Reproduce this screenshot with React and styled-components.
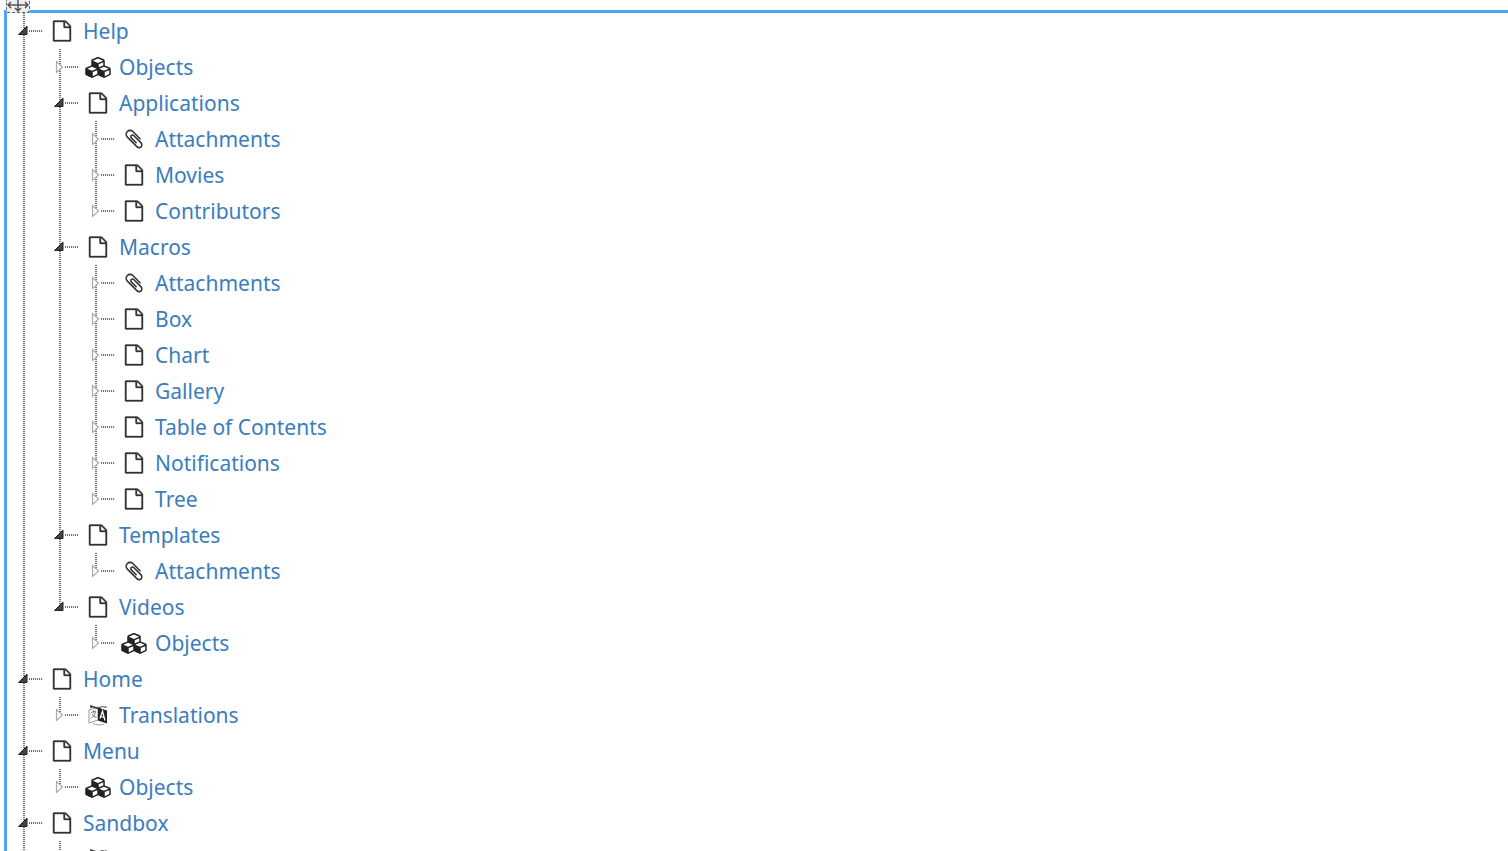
import React from "react";
import styled, { createGlobalStyle } from "styled-components";

const tree = [
  {
    label: "Help",
    icon: "page",
    children: [
      { label: "Objects", icon: "cubes" },
      {
        label: "Applications",
        icon: "page",
        children: [
          { label: "Attachments", icon: "clip" },
          { label: "Movies", icon: "page" },
          { label: "Contributors", icon: "page" },
        ],
      },
      {
        label: "Macros",
        icon: "page",
        children: [
          { label: "Attachments", icon: "clip" },
          { label: "Box", icon: "page" },
          { label: "Chart", icon: "page" },
          { label: "Gallery", icon: "page" },
          { label: "Table of Contents", icon: "page" },
          { label: "Notifications", icon: "page" },
          { label: "Tree", icon: "page" },
        ],
      },
      {
        label: "Templates",
        icon: "page",
        children: [{ label: "Attachments", icon: "clip" }],
      },
      {
        label: "Videos",
        icon: "page",
        children: [{ label: "Objects", icon: "cubes" }],
      },
    ],
  },
  {
    label: "Home",
    icon: "page",
    children: [{ label: "Translations", icon: "language" }],
  },
  {
    label: "Menu",
    icon: "page",
    children: [{ label: "Objects", icon: "cubes" }],
  },
  {
    label: "Sandbox",
    icon: "page",
    children: [{ label: "Translations", icon: "language" }],
  },
  { label: "XWiki", icon: "page" },
];

const PageIcon = () => (
  <svg width="20" height="22" viewBox="-60 -40 1656 1872" fill="#333" stroke="#333" strokeWidth="30">
    <path d="M1468 380q28 28 48 76t20 88v1152q0 40-28 68t-68 28H96q-40 0-68-28t-28-68V96q0-40 28-68T96 0h896q40 0 88 20t76 48zm-444-244v376h376q-10-29-22-41l-313-313q-12-12-41-22zm384 1528V640H992q-40 0-68-28t-28-68V128H128v1536h1280z" />
  </svg>
);

const CubesIcon = () => (
  <svg width="26" height="21" viewBox="0 0 2176 1792" fill="#222">
    <path d="M640 1632l384-192v-314l-384 164v342zm-64-454l404-173-404-173-404 173zm1088 454l384-192v-314l-384 164v342zm-64-454l404-173-404-173-404 173zm-448-293l384-165V454l-384 164v267zm-64-379l441-189-441-189-441 189zm1088 518v416q0 36-19 67t-52 47l-448 224q-25 14-57 14t-57-14l-448-224q-5-2-7-4-2 2-7 4l-448 224q-25 14-57 14t-57-14L71 1554q-33-16-52-47t-19-67v-416q0-38 21.500-70T78 906l434-186V320q0-38 21.500-70t56.500-48l448-192q23-10 50-10t50 10l448 192q35 16 56.500 48t21.500 70v400l434 186q36 16 57 48t21 70z" />
  </svg>
);

const ClipIcon = () => (
  <svg width="18" height="22" viewBox="0 0 1408 1792" fill="#333">
    <path d="M1404 1385q0 117-79 196t-196 79q-135 0-235-100L117 784Q4 669 4 513q0-159 110-270t269-111q158 0 273 113l605 606q10 10 10 22 0 16-30.500 46.500T1194 950q-13 0-23-10L565 333q-79-77-181-77-106 0-179 75t-73 181q0 105 76 181l776 777q63 63 145 63 64 0 106-42t42-106q0-82-63-145L633 659q-26-24-60-24-29 0-48 19t-19 48q0 32 25 59l410 410q10 10 10 22 0 16-31 47t-47 31q-12 0-22-10L441 851q-63-61-63-149 0-82 57-139t139-57q88 0 149 63l581 581q100 98 100 235z" />
  </svg>
);

const LanguageIcon = () => (
  <svg width="20" height="22" viewBox="0 0 20 22">
    <path d="M1 6l9-3v13l-9 3z" fill="#fff" stroke="#999" />
    <path d="M3 8.500l5-1.500M5.500 6.500v2M7.500 8q-1 4-4.500 6.500M4 10q1.500 3 4.500 3.500" fill="none" stroke="#777" />
    <path d="M3 4V2l7 2.500" fill="none" stroke="#333" strokeWidth="1.500" />
    <path d="M10 4l4-1.500 4 1V2" fill="none" stroke="#555" />
    <path d="M10 3.500l9 3v13l-9-3z" fill="#222" />
    <path d="M12 14.500l2.500-7.500 2.500 9.500M13 12.500l3 1" fill="none" stroke="#fff" strokeWidth="1.300" />
    <path d="M5 19.500q5 2.500 11 .500" fill="none" stroke="#aaa" strokeWidth="1.300" />
  </svg>
);

const icons = { page: PageIcon, cubes: CubesIcon, clip: ClipIcon, language: LanguageIcon };

const Toggle = ({ open }) => (
  <svg width="11" height="14" viewBox="0 0 11 14">
    {open ? (
      <path d="M9 2v8.500H0.500z" fill="#444" stroke="#222" />
    ) : (
      <path d="M2.500 1.500v11L8.500 7z" fill="#fff" stroke="#aaa" strokeWidth="1.200" />
    )}
  </svg>
);

const TreeNode = ({ node }) => {
  const Icon = icons[node.icon];
  const open = Boolean(node.children);

  return (
    <Item>
      <Row>
        <ToggleButton type="button" aria-expanded={open} aria-label={`Toggle ${node.label}`}>
          <Toggle open={open} />
        </ToggleButton>
        <Connector />
        <NodeLink href="#">
          <IconBox>
            <Icon />
          </IconBox>
          {node.label}
        </NodeLink>
      </Row>
      {open && <TreeList nodes={node.children} />}
    </Item>
  );
};

const TreeList = ({ nodes }) => (
  <List>
    {nodes.map((node, index) => (
      <TreeNode key={index} node={node} />
    ))}
  </List>
);

const App = () => {
  return (
    <Page>
      <GlobalStyle />
      <DragHandle type="button" aria-label="Move widget">
        <svg width="22" height="12" viewBox="0 0 22 12" fill="none" stroke="#555" strokeWidth="1.500">
          <path d="M1 5h20M4 2L1 5l3 3M18 2l3 3-3 3M11 0v11M8 8l3 3 3-3" />
        </svg>
      </DragHandle>
      <Widget>
        <TreeList nodes={tree} />
      </Widget>
    </Page>
  );
};

export default App;

const GlobalStyle = createGlobalStyle`
  body {
    margin: 0;
    background: #fff;
  }
`;

const Page = styled.div`
  position: relative;
  box-sizing: border-box;
  height: 100vh;
  padding: 10px 0 0 4px;
  overflow: hidden;
  font-family: "Noto Sans", "Open Sans", sans-serif;
  font-size: 21px;
`;

const Widget = styled.main`
  border: 3px solid #4fa5f0;
  border-right: none;
  padding-left: 11px;
`;

// sits over the top edge of the widget
const DragHandle = styled.button`
  position: absolute;
  top: 0;
  left: 6px;
  display: flex;
  justify-content: center;
  width: 24px;
  height: 13px;
  padding: 0;
  border: 1px dashed #666;
  border-top: none;
  border-radius: 0 0 4px 4px;
  background: #eee;
  overflow: hidden;
`;

const List = styled.ul`
  margin: 0;
  padding: 0;
  list-style: none;

  & & {
    padding-left: 36px;
  }
`;

const Item = styled.li`
  background: repeating-linear-gradient(#777 0 1px, #eee 1px 2px) 5px 0 / 2px 100% no-repeat;

  &:last-child {
    background-size: 2px 18px;
  }
`;

const Row = styled.div`
  display: flex;
  align-items: center;
  height: 36px;
`;

const ToggleButton = styled.button`
  display: flex;
  padding: 0;
  border: none;
  background: none;
  cursor: pointer;
`;

const Connector = styled.span`
  width: 14px;
  height: 2px;
  margin-right: 6px;
  background: repeating-linear-gradient(90deg, #777 0 1px, #eee 1px 2px);
`;

const NodeLink = styled.a`
  display: flex;
  align-items: center;
  gap: 8px;
  color: #3b7dbd;
  line-height: 36px;
  text-decoration: none;
  white-space: nowrap;
`;

const IconBox = styled.span`
  display: flex;
  align-items: center;
  justify-content: center;
  width: 26px;
`;
